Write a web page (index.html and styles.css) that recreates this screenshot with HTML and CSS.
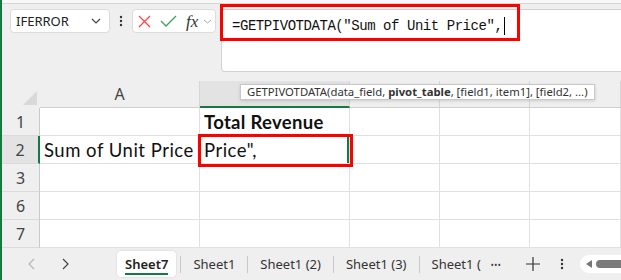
FILE: index.html
```html
<!DOCTYPE html>
<html lang="en">
<head>
    <meta charset="UTF-8">
    <title>GETPIVOTDATA</title>
    <link rel="stylesheet" href="styles.css">
</head>
<body>
    <div class="app">
        <div class="ribbon-edge"></div>

        <div class="formula-row">
            <div class="name-box">
                <span>IFERROR</span>
                <svg width="10" height="6" viewBox="0 0 10 6"><polyline points="1,1 5,5 9,1" fill="none" stroke="#444" stroke-width="1.2"/></svg>
            </div>
            <div class="kebab">
                <svg width="4" height="12" viewBox="0 0 4 12"><circle cx="2" cy="2" r="1.2" fill="#333"/><circle cx="2" cy="6" r="1.2" fill="#333"/><circle cx="2" cy="10" r="1.2" fill="#333"/></svg>
            </div>
            <div class="fx-box">
                <svg class="ico-cancel" width="13" height="13" viewBox="0 0 13 13"><path d="M1 1 L12 12 M12 1 L1 12" stroke="#f04a4a" stroke-width="1.3" fill="none"/></svg>
                <svg class="ico-enter" width="17" height="12" viewBox="0 0 17 12"><polyline points="1,6 6,11 16,1" fill="none" stroke="#3aa35b" stroke-width="1.3"/></svg>
                <span class="fx">fx</span>
                <svg width="9" height="5" viewBox="0 0 9 5"><polyline points="1,1 4.5,4 8,1" fill="none" stroke="#aaa" stroke-width="1"/></svg>
            </div>
            <div class="formula-bar">
                <span class="formula-text">=GETPIVOTDATA("Sum of Unit Price",</span><span class="caret"></span>
            </div>
        </div>

        <div class="sheet">
            <div class="corner">
                <svg width="14" height="14" viewBox="0 0 14 14"><polygon points="14,0 14,14 0,14" fill="#d9d9d9"/></svg>
            </div>
            <div class="col-head">A</div>
            <div class="col-head active"></div>
            <div class="col-head"></div>
            <div class="col-head"></div>
            <div class="col-head"></div>

            <div class="row-head">1</div>
            <div class="cell"></div>
            <div class="cell bold">Total Revenue</div>
            <div class="cell"></div>
            <div class="cell"></div>
            <div class="cell"></div>

            <div class="row-head active">2</div>
            <div class="cell">Sum of Unit Price</div>
            <div class="cell selected">Price",</div>
            <div class="cell"></div>
            <div class="cell"></div>
            <div class="cell"></div>

            <div class="row-head">3</div>
            <div class="cell"></div>
            <div class="cell"></div>
            <div class="cell"></div>
            <div class="cell"></div>
            <div class="cell"></div>

            <div class="row-head">6</div>
            <div class="cell"></div>
            <div class="cell"></div>
            <div class="cell"></div>
            <div class="cell"></div>
            <div class="cell"></div>

            <div class="row-head">7</div>
            <div class="cell"></div>
            <div class="cell"></div>
            <div class="cell"></div>
            <div class="cell"></div>
            <div class="cell"></div>

            <div class="tooltip">GETPIVOTDATA(data_field, <b>pivot_table</b>, [field1, item1], [field2, ...)</div>
        </div>

        <div class="tabs">
            <div class="tab-nav">
                <svg width="8" height="12" viewBox="0 0 8 12"><polyline points="6,1 1,6 6,11" fill="none" stroke="#b5b5b5" stroke-width="1.2"/></svg>
                <svg width="8" height="12" viewBox="0 0 8 12"><polyline points="2,1 7,6 2,11" fill="none" stroke="#444" stroke-width="1.2"/></svg>
            </div>
            <div class="tab active"><span>Sheet7</span></div>
            <span class="sep"></span>
            <div class="tab">Sheet1</div>
            <span class="sep"></span>
            <div class="tab">Sheet1 (2)</div>
            <span class="sep"></span>
            <div class="tab">Sheet1 (3)</div>
            <span class="sep"></span>
            <div class="tab last">Sheet1 (</div>
            <div class="more">&bull;&bull;&bull;</div>
            <div class="add">
                <svg width="14" height="14" viewBox="0 0 14 14"><path d="M7 0 V14 M0 7 H14" stroke="#333" stroke-width="1.2"/></svg>
            </div>
            <div class="kebab small">
                <svg width="4" height="12" viewBox="0 0 4 12"><circle cx="2" cy="2" r="1.2" fill="#333"/><circle cx="2" cy="6" r="1.2" fill="#333"/><circle cx="2" cy="10" r="1.2" fill="#333"/></svg>
            </div>
            <div class="hscroll">
                <svg width="6" height="8" viewBox="0 0 6 8"><polygon points="6,0 6,8 0,4" fill="#777"/></svg>
                <span class="thumb"></span>
            </div>
        </div>
    </div>
</body>
</html>
```

FILE: styles.css
```css
body {
    margin: 0;
    font-family: "Noto Sans", sans-serif;
    background-color: #efefef;
}
.app {
    width: 621px;
    height: 280px;
    overflow: hidden;
    box-sizing: border-box;
    border-left: 2px solid #107c41;
    display: flex;
    flex-direction: column;
    background-color: #efefef;
}
.ribbon-edge {
    flex: none;
    height: 3px;
    background-color: #f8f8f8;
    border-bottom: 1px solid #d6d6d6;
}
.formula-row {
    flex: none;
    height: 77px;
    box-sizing: border-box;
    padding: 5px 0 0 8px;
    display: flex;
    align-items: flex-start;
}
.name-box {
    flex: none;
    width: 100px;
    height: 24px;
    box-sizing: border-box;
    background-color: white;
    border: 1px solid #dcdcdc;
    border-radius: 4px;
    padding: 0 8px 0 5px;
    display: flex;
    align-items: center;
    justify-content: space-between;
    font-size: 13px;
    color: #222;
}
.kebab {
    flex: none;
    width: 22px;
    height: 24px;
    display: flex;
    align-items: center;
    justify-content: center;
}
.fx-box {
    flex: none;
    width: 84px;
    height: 24px;
    box-sizing: border-box;
    background-color: white;
    border: 1px solid #dcdcdc;
    border-radius: 4px;
    padding-left: 5px;
    display: flex;
    align-items: center;
}
.ico-enter {
    margin-left: 9px;
}
.fx {
    margin-left: 9px;
    margin-right: 5px;
    font-family: "Liberation Serif", serif;
    font-style: italic;
    font-size: 17px;
    color: #333;
    line-height: 1;
}
.formula-bar {
    position: relative;
    flex: none;
    width: 420px;
    height: 63px;
    margin-left: 5px;
    box-sizing: border-box;
    background-color: white;
    border: 1px solid #d2d2d2;
    border-right: none;
    border-radius: 4px 0 0 4px;
    padding: 7px 0 0 10px;
    display: flex;
    align-items: flex-start;
}
.formula-bar::after {
    content: "";
    position: absolute;
    left: -2px;
    top: -6px;
    width: 300px;
    height: 37px;
    box-sizing: border-box;
    border: 3px solid #ff0000;
}
.formula-text {
    font-family: "Liberation Mono", monospace;
    font-size: 14px;
    letter-spacing: -0.45px;
    line-height: 18px;
    color: #111;
}
.caret {
    width: 1px;
    height: 18px;
    margin-left: 2px;
    background-color: #000;
}
.sheet {
    position: relative;
    flex: none;
    height: 167px;
    display: grid;
    grid-template-columns: 38px 160px 150px 90px 90px 91px;
    grid-template-rows: 27px repeat(5, 28px);
    background-color: white;
}
.corner {
    background-color: #efefef;
    display: flex;
    align-items: flex-end;
    justify-content: flex-end;
    padding: 0 3px 3px 0;
}
.col-head {
    background-color: #efefef;
    border-right: 1px solid #d6d6d6;
    border-bottom: 1px solid #cfcfcf;
    display: flex;
    align-items: center;
    justify-content: center;
    font-size: 16px;
    color: #444;
}
.col-head.active {
    background-color: #e3e3e3;
    border-bottom: 2px solid #107c41;
}
.row-head {
    background-color: #efefef;
    border-right: 1px solid #c9c9c9;
    border-bottom: 1px solid #dadada;
    display: flex;
    align-items: center;
    justify-content: center;
    font-size: 16px;
    color: #444;
}
.row-head.active {
    background-color: #e3e3e3;
    border-right: 2px solid #107c41;
}
.cell {
    border-right: 1px solid #e0e0e0;
    border-bottom: 1px solid #e0e0e0;
    padding-left: 4px;
    display: flex;
    align-items: center;
    font-family: Lato, sans-serif;
    font-size: 18.5px;
    letter-spacing: 0.5px;
    color: #111;
    white-space: nowrap;
}
.cell.bold {
    font-weight: bold;
    letter-spacing: 0.3px;
}
.cell.selected {
    position: relative;
    box-shadow: inset -2px 0 0 #107c41;
}
.cell.selected::after {
    content: "";
    position: absolute;
    left: -2px;
    top: -2px;
    width: 155px;
    height: 33px;
    box-sizing: border-box;
    border: 3px solid #ff0000;
}
.tooltip {
    position: absolute;
    left: 238px;
    top: 3px;
    height: 16px;
    box-sizing: border-box;
    padding: 0 6px;
    background-color: white;
    border: 1px solid #c8c8c8;
    box-shadow: 0 1px 3px rgba(0, 0, 0, 0.15);
    font-size: 11.3px;
    line-height: 14px;
    color: #333;
    white-space: nowrap;
}
.tabs {
    flex: 1;
    display: flex;
    align-items: center;
    background-color: #efefef;
    font-size: 13px;
    color: #333;
}
.tab-nav {
    width: 115px;
    flex: none;
    box-sizing: border-box;
    padding-left: 26px;
    display: flex;
    align-items: center;
    gap: 25px;
}
.tab {
    flex: none;
    padding: 0 12px;
    white-space: nowrap;
}
.tab.active {
    align-self: stretch;
    margin: 3px 4px 3px 0;
    padding: 0 8px;
    background-color: white;
    border-radius: 4px;
    box-shadow: 0 0 2px rgba(0, 0, 0, 0.15);
    display: flex;
    align-items: center;
    font-weight: 600;
    color: #222;
}
.tab.active span {
    border-bottom: 2px solid #107c41;
    line-height: 18px;
    padding-top: 2px;
}
.tab.last {
    padding-right: 0;
}
.sep {
    flex: none;
    width: 1px;
    height: 17px;
    background-color: #c8c8c8;
}
.more {
    flex: none;
    margin-left: 10px;
    font-size: 8px;
    letter-spacing: 0.5px;
    color: #333;
}
.add {
    flex: none;
    margin-left: 25px;
    display: flex;
}
.kebab.small {
    width: 26px;
    margin-left: 9px;
}
.hscroll {
    flex: none;
    margin-left: 5px;
    width: 60px;
    height: 18px;
    border-radius: 9px 0 0 9px;
    background-color: white;
    display: flex;
    align-items: center;
    padding-left: 6px;
    gap: 4px;
}
.thumb {
    width: 40px;
    height: 8px;
    border-radius: 4px;
    background-color: #7a7a7a;
}
```
